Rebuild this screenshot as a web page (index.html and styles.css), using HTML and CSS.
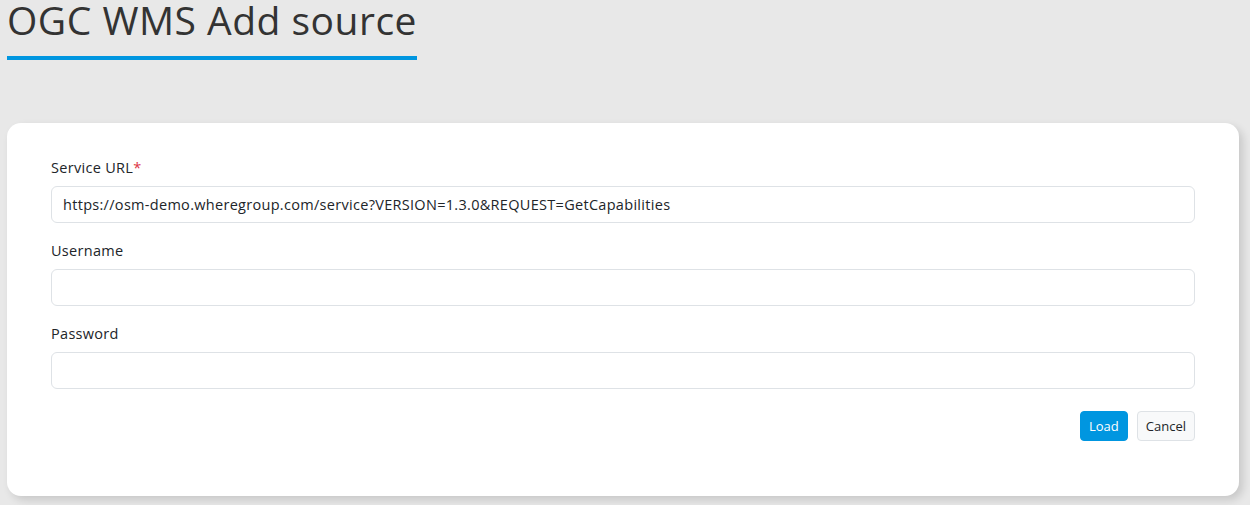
FILE: index.html
```html
<!DOCTYPE html>
<html lang="en">
<head>
<meta charset="utf-8">
<title>OGC WMS Add source</title>
<link rel="stylesheet" href="styles.css">
</head>
<body>
<div class="page">
  <h1 class="title">OGC WMS Add source</h1>
  <div class="card">
    <form class="form">
      <div class="group">
        <label class="label">Service URL<span class="req">*</span></label>
        <input class="input" type="text" value="https://osm-demo.wheregroup.com/service?VERSION=1.3.0&amp;REQUEST=GetCapabilities">
      </div>
      <div class="group">
        <label class="label">Username</label>
        <input class="input" type="text">
      </div>
      <div class="group">
        <label class="label">Password</label>
        <input class="input" type="password">
      </div>
      <div class="actions">
        <button type="button" class="btn btn-primary">Load</button>
        <button type="button" class="btn btn-light">Cancel</button>
      </div>
    </form>
  </div>
</div>
</body>
</html>
```
FILE: styles.css
```css
html, body {
  margin: 0;
  padding: 0;
  background: #e8e8e8;
  height: 100%;
}
body {
  font-family: "Open Sans", "Noto Sans", sans-serif;
  color: #212529;
}
.page {
  padding: 0 11px 0 7px;
}
.title {
  display: inline-block;
  margin: -7px 0 0 0;
  padding: 0 0 10px 0;
  font-size: 39px;
  font-weight: 400;
  letter-spacing: 0.5px;
  line-height: 53px;
  color: #333;
  border-bottom: 4px solid #0096e0;
  min-width: 410px;
  white-space: nowrap;
}
.card {
  margin-top: 63px;
  background: #fff;
  border-radius: 14px;
  box-shadow: 4px 4px 8px rgba(0, 0, 0, 0.14);
  padding: 34px 44px 55px 44px;
}
.group {
  display: flex;
  flex-direction: column;
  margin-bottom: 17px;
}
.label {
  font-size: 14.5px;
  letter-spacing: 0.3px;
  line-height: 21px;
  margin-bottom: 8px;
  color: #212529;
}
.req {
  color: #dc3545;
}
.input {
  height: 37px;
  box-sizing: border-box;
  border: 1px solid #dee2e6;
  border-radius: 6px;
  padding: 0 11px;
  font-family: inherit;
  font-size: 14.5px;
  letter-spacing: 0.3px;
  color: #212529;
  background: #fff;
}
.actions {
  display: flex;
  justify-content: flex-end;
  gap: 9px;
  padding-top: 5px;
}
.btn {
  font-family: inherit;
  font-size: 13px;
  height: 30px;
  padding: 0 8px;
  border-radius: 4px;
  border: 1px solid transparent;
  cursor: pointer;
}
.btn-primary {
  background: #0096e0;
  color: #fff;
  border-color: #0096e0;
}
.btn-light {
  background: #f8f9fa;
  color: #212529;
  border-color: #dee2e6;
}
```
